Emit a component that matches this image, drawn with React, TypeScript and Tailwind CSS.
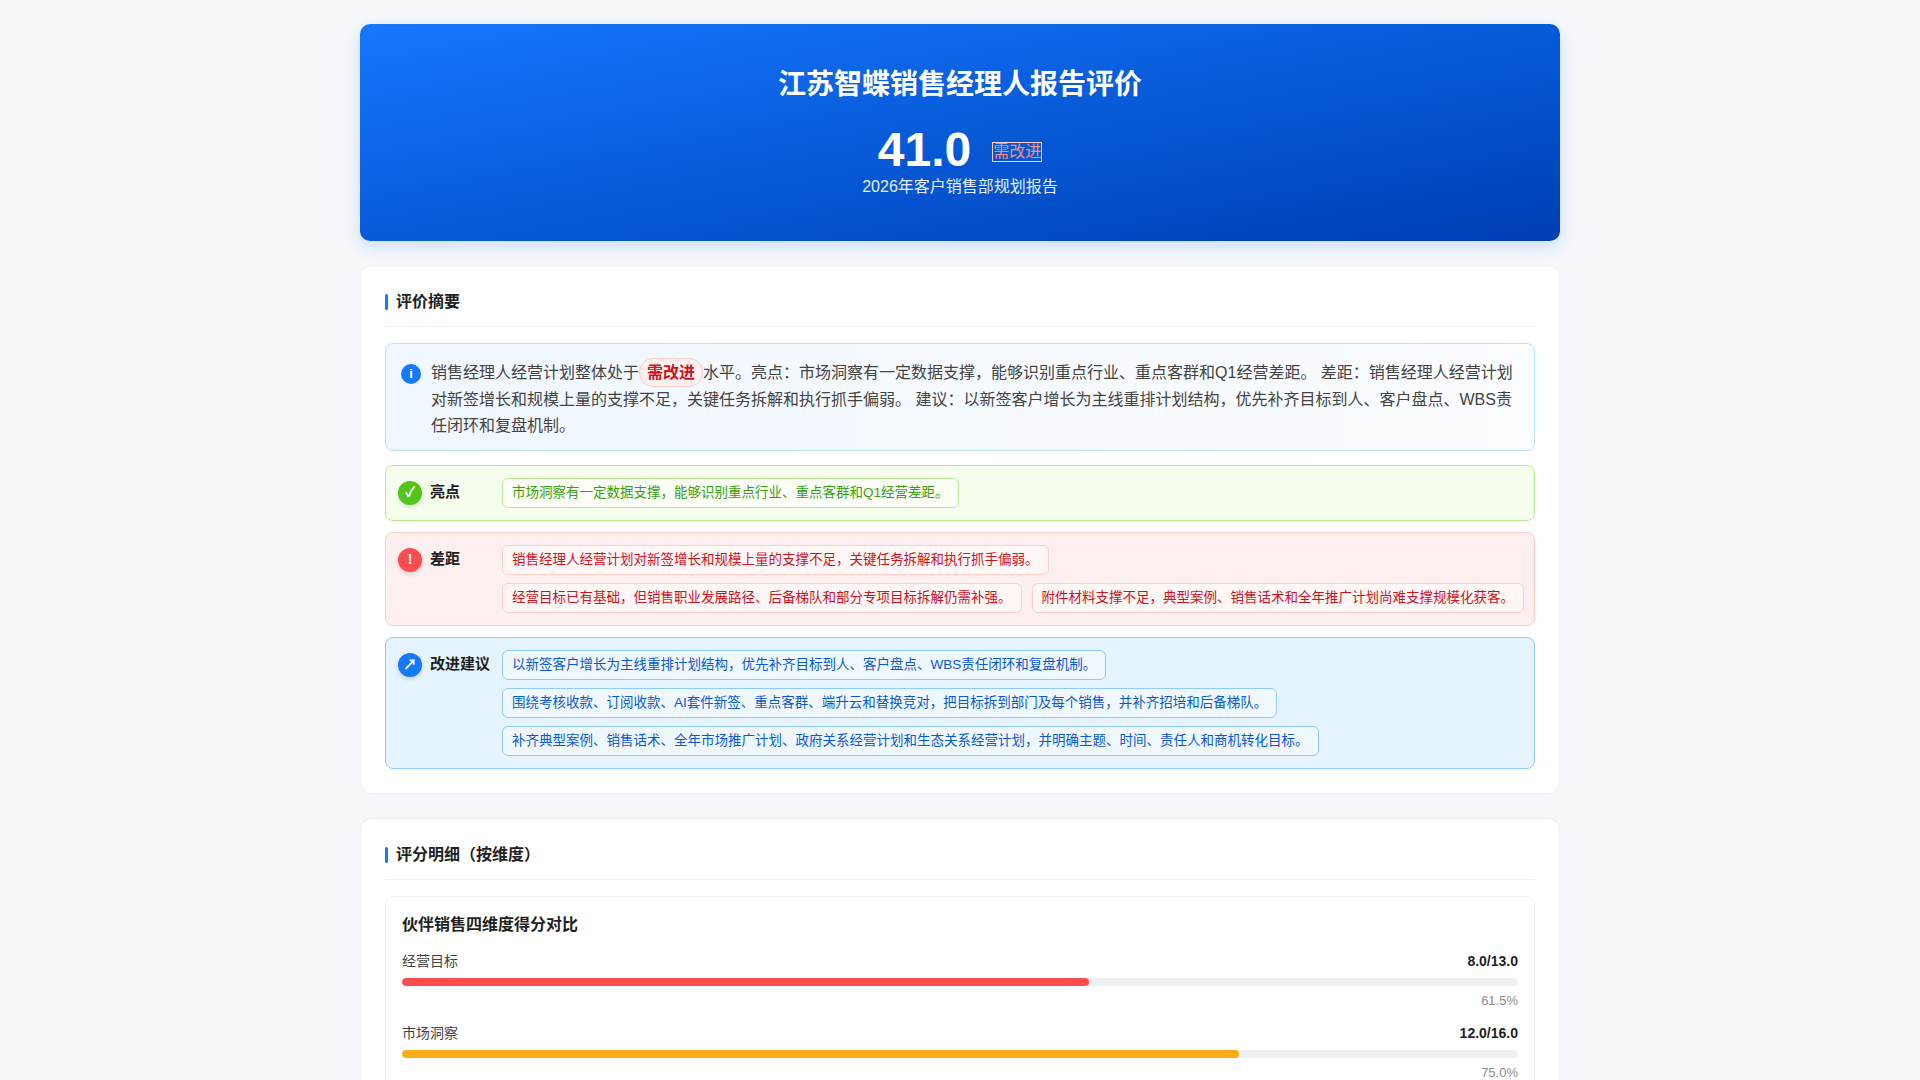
import React from "react"

// 评价摘要数据
const summaryText = {
  before: "销售经理人经营计划整体处于",
  level: "需改进",
  after:
    "水平。亮点：市场洞察有一定数据支撑，能够识别重点行业、重点客群和Q1经营差距。 差距：销售经理人经营计划对新签增长和规模上量的支撑不足，关键任务拆解和执行抓手偏弱。 建议：以新签客户增长为主线重排计划结构，优先补齐目标到人、客户盘点、WBS责任闭环和复盘机制。",
}

const highlights = ["市场洞察有一定数据支撑，能够识别重点行业、重点客群和Q1经营差距。"]

const gaps = [
  "销售经理人经营计划对新签增长和规模上量的支撑不足，关键任务拆解和执行抓手偏弱。",
  "经营目标已有基础，但销售职业发展路径、后备梯队和部分专项目标拆解仍需补强。",
  "附件材料支撑不足，典型案例、销售话术和全年推广计划尚难支撑规模化获客。",
]

const suggestions = [
  "以新签客户增长为主线重排计划结构，优先补齐目标到人、客户盘点、WBS责任闭环和复盘机制。",
  "围绕考核收款、订阅收款、AI套件新签、重点客群、端升云和替换竞对，把目标拆到部门及每个销售，并补齐招培和后备梯队。",
  "补齐典型案例、销售话术、全年市场推广计划、政府关系经营计划和生态关系经营计划，并明确主题、时间、责任人和商机转化目标。",
]

const dimensions = [
  { name: "经营目标", score: 8.0, max: 13.0, bar: "bg-[#ff4d4f]" },
  { name: "市场洞察", score: 12.0, max: 16.0, bar: "bg-[#faad14]" },
]

function SectionTitle({ children }: { children: React.ReactNode }) {
  return (
    <div className="flex items-center gap-2 border-b border-[#f0f0f0] pb-3">
      <span className="h-4 w-[3px] rounded-sm bg-[#1677ff]" />
      <h2 className="text-[16px] leading-6 font-bold text-[#1f1f1f]">{children}</h2>
    </div>
  )
}

interface TagGroupProps {
  icon: string
  iconBg: string
  label: string
  items: string[]
  box: string
  chip: string
}

function TagGroup({ icon, iconBg, label, items, box, chip }: TagGroupProps) {
  return (
    <div className={`flex items-start rounded-lg border py-3 pr-2 pl-3 ${box}`}>
      <div className="flex h-[30px] shrink-0 items-center">
        <span
          className={`flex h-6 w-6 items-center justify-center rounded-full text-[14px] font-bold text-white shadow-[0_2px_4px_rgba(0,0,0,0.15)] ${iconBg}`}
        >
          {icon}
        </span>
      </div>
      <div className="ml-2 flex h-[30px] w-[64px] shrink-0 items-center text-[15px] font-bold text-[#1f1f1f]">
        {label}
      </div>
      <div className="ml-2 flex flex-1 flex-wrap gap-x-[10px] gap-y-2">
        {items.map((text) => (
          <span key={text} className={`rounded-md border px-[9px] text-[13.5px] leading-[28px] ${chip}`}>
            {text}
          </span>
        ))}
      </div>
    </div>
  )
}

export default function App() {
  return (
    <div
      className="min-h-screen bg-[#f5f7fa] pt-6 pb-10"
      style={{ fontFamily: '"Liberation Sans", "Noto Sans CJK SC", sans-serif' }}
    >
      <div className="mx-auto flex w-[1200px] flex-col gap-6">
        {/* 顶部得分 */}
        <header className="rounded-[10px] bg-linear-to-br from-[#1677ff] to-[#003eb3] pt-[43px] pb-[42px] text-center text-white shadow-[0_6px_16px_rgba(22,119,255,0.18)]">
          <h1 className="text-[28px] leading-9 font-bold">江苏智蝶销售经理人报告评价</h1>
          <div className="mt-[23px] flex items-center justify-center">
            <span className="text-[48px] leading-[48px] font-bold">41.0</span>
            <span className="mt-1 ml-[21px] border border-[#ffccc7] text-[16px] leading-[18px] text-[#ff8a80]">
              需改进
            </span>
          </div>
          <p className="mt-px text-[16px] leading-6 text-white/90">2026年客户销售部规划报告</p>
        </header>

        {/* 评价摘要 */}
        <section className="rounded-xl border border-[#eef0f3] bg-white p-6">
          <SectionTitle>评价摘要</SectionTitle>

          <div className="mt-4 flex items-start gap-[10px] rounded-lg border border-[#bae0ff] bg-linear-to-r from-[#f0f7ff] to-[#fbfdff] px-[15px] pt-[16px] pb-[10px]">
            <span className="mt-[4px] flex h-5 w-5 shrink-0 items-center justify-center rounded-full bg-[#1677ff] text-[13px] font-bold text-white">
              i
            </span>
            <p className="text-[16px] leading-[26.5px] text-[#434343]">
              {summaryText.before}
              <span className="rounded-[14px] border border-[#ffccc7] bg-[#fff1f0] px-[7px] py-[5px] font-bold text-[#cf1322]">
                {summaryText.level}
              </span>
              {summaryText.after}
            </p>
          </div>

          <div className="mt-[14px] flex flex-col gap-[11px]">
            <TagGroup
              icon="✓"
              iconBg="bg-[#52c41a]"
              label="亮点"
              items={highlights}
              box="border-[#b7eb8f] bg-[#f6ffed]"
              chip="border-[#b7eb8f] bg-white/50 text-[#389e0d]"
            />
            <TagGroup
              icon="!"
              iconBg="bg-[#ff4d4f]"
              label="差距"
              items={gaps}
              box="border-[#ffccc7] bg-[#fff0f0]"
              chip="border-[#ffccc7] bg-white/40 text-[#cf1322]"
            />
            <TagGroup
              icon="↗"
              iconBg="bg-[#1677ff]"
              label="改进建议"
              items={suggestions}
              box="border-[#91caff] bg-[#e6f4ff]"
              chip="border-[#91caff] bg-white/40 text-[#0958d9]"
            />
          </div>
        </section>

        {/* 评分明细 */}
        <section className="rounded-xl border border-[#eef0f3] bg-white p-6">
          <SectionTitle>评分明细（按维度）</SectionTitle>

          <div className="mt-4 rounded-lg border border-[#f0f0f0] bg-white p-4">
            <h3 className="text-[16px] leading-6 font-bold text-[#1f1f1f]">伙伴销售四维度得分对比</h3>
            <div className="mt-3 flex flex-col gap-3">
              {dimensions.map((d) => {
                const pct = (d.score / d.max) * 100
                return (
                  <div key={d.name}>
                    <div className="flex items-center justify-between text-[14px] leading-6">
                      <span className="text-[#434343]">{d.name}</span>
                      <span className="font-bold text-[#1f1f1f]">
                        {d.score.toFixed(1)}/{d.max.toFixed(1)}
                      </span>
                    </div>
                    <div className="mt-[5px] h-2 w-full overflow-hidden rounded-full bg-[#f0f0f0]">
                      <div className={`h-full rounded-full ${d.bar}`} style={{ width: `${pct}%` }} />
                    </div>
                    <div className="mt-[7px] text-right text-[13px] leading-4 text-[#8c8c8c]">{pct.toFixed(1)}%</div>
                  </div>
                )
              })}
            </div>
          </div>
        </section>
      </div>
    </div>
  )
}
